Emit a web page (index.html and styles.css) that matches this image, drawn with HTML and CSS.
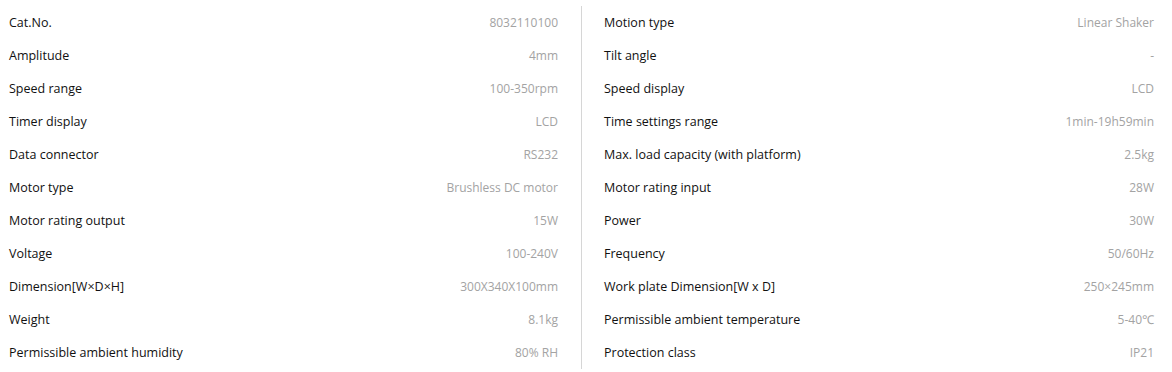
FILE: index.html
```html
<!DOCTYPE html>
<html lang="en">
<head>
<meta charset="utf-8">
<title>Specifications</title>
<link rel="stylesheet" href="styles.css">
</head>
<body>
<div class="specs">
  <div class="col col-left">
    <div class="row"><span class="label">Cat.No.</span><span class="value">8032110100</span></div>
    <div class="row"><span class="label">Amplitude</span><span class="value">4mm</span></div>
    <div class="row"><span class="label">Speed range</span><span class="value">100-350rpm</span></div>
    <div class="row"><span class="label">Timer display</span><span class="value">LCD</span></div>
    <div class="row"><span class="label">Data connector</span><span class="value">RS232</span></div>
    <div class="row"><span class="label">Motor type</span><span class="value">Brushless DC motor</span></div>
    <div class="row"><span class="label">Motor rating output</span><span class="value">15W</span></div>
    <div class="row"><span class="label">Voltage</span><span class="value">100-240V</span></div>
    <div class="row"><span class="label">Dimension[W×D×H]</span><span class="value">300X340X100mm</span></div>
    <div class="row"><span class="label">Weight</span><span class="value">8.1kg</span></div>
    <div class="row"><span class="label">Permissible ambient humidity</span><span class="value">80% RH</span></div>
  </div>
  <div class="col col-right">
    <div class="row"><span class="label">Motion type</span><span class="value">Linear Shaker</span></div>
    <div class="row"><span class="label">Tilt angle</span><span class="value">-</span></div>
    <div class="row"><span class="label">Speed display</span><span class="value">LCD</span></div>
    <div class="row"><span class="label">Time settings range</span><span class="value">1min-19h59min</span></div>
    <div class="row"><span class="label">Max. load capacity (with platform)</span><span class="value">2.5kg</span></div>
    <div class="row"><span class="label">Motor rating input</span><span class="value">28W</span></div>
    <div class="row"><span class="label">Power</span><span class="value">30W</span></div>
    <div class="row"><span class="label">Frequency</span><span class="value">50/60Hz</span></div>
    <div class="row"><span class="label">Work plate Dimension[W x D]</span><span class="value">250×245mm</span></div>
    <div class="row"><span class="label">Permissible ambient temperature</span><span class="value">5-40℃</span></div>
    <div class="row"><span class="label">Protection class</span><span class="value">IP21</span></div>
  </div>
</div>
</body>
</html>
```
FILE: styles.css
```css
html, body {
  margin: 0;
  padding: 0;
  background: #ffffff;
}
body {
  font-family: "Open Sans", "Noto Sans", sans-serif;
}
.specs {
  display: flex;
  padding-top: 6px;
}
.col {
  display: flex;
  flex-direction: column;
}
.col-left {
  width: 582px;
  box-sizing: border-box;
  padding: 0 23px 0 9px;
  border-right: 1px solid #d6d6d6;
}
.col-right {
  flex: 1;
  padding: 0 18px 0 22px;
}
.row {
  height: 33px;
  display: flex;
  align-items: center;
  justify-content: space-between;
}
.label {
  font-size: 12.5px;
  font-weight: 500;
  color: #111111;
}
.value {
  font-size: 12px;
  font-weight: 400;
  color: #a3a3a3;
}
```
